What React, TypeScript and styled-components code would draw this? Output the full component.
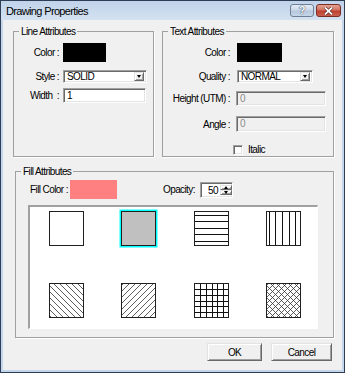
import React from "react";
import styled, { createGlobalStyle } from "styled-components";

const GlobalStyle = createGlobalStyle`
  html, body { margin: 0; padding: 0; background: #ffffff; }
  body {
    font-family: "Liberation Sans", Arial, sans-serif;
    font-size: 10px;
    letter-spacing: -0.6px;
    color: #000000;
  }
`;

const Window = styled.div`
  width: 345px;
  height: 373px;
  box-sizing: border-box;
  border: 1px solid #2e3e55;
  background: #c4d6ec;
  display: flex;
  flex-direction: column;
`;

const TitleBar = styled.div`
  height: 19px;
  flex: none;
  display: flex;
  align-items: center;
  justify-content: space-between;
  padding: 0 3px 0 5px;
  background: linear-gradient(#c0d3ea, #d4e2f1);
`;

const Title = styled.span`
  font-size: 11px;
  letter-spacing: -0.65px;
  color: #000;
`;

const CaptionButtons = styled.div`
  display: flex;
  gap: 2px;
`;

const CaptionButton = styled.div<{ $close?: boolean }>`
  width: ${(p) => (p.$close ? 25 : 24)}px;
  height: 13px;
  box-sizing: border-box;
  border-radius: 3px;
  display: flex;
  align-items: center;
  justify-content: center;
  border: 1px solid ${(p) => (p.$close ? "#7a2e26" : "#6f8096")};
  background: ${(p) =>
    p.$close
      ? "linear-gradient(#e3a393 0%, #d27462 45%, #bf3f2e 55%, #c9624f 100%)"
      : "linear-gradient(#e4ecf6 0%, #ccd9ea 45%, #b7c8de 55%, #c6d5e8 100%)"};
  color: #fff;
  font-weight: bold;
  font-size: 11px;
  letter-spacing: 0;
  line-height: 11px;
  text-shadow: 0 0 1px #2a3a50, 0 0 1px #2a3a50;
`;

const Client = styled.div`
  flex: 1;
  margin: 0 2px 2px;
  background: #f0f0f0;
  padding: 5px 8px 0 10px;
  display: flex;
  flex-direction: column;
`;

const TopRow = styled.div`
  display: flex;
  gap: 8px;
`;

const GroupBox = styled.fieldset<{ $w: number; $h: number; $ml?: number; $mt?: number }>`
  margin: ${(p) => p.$mt ?? 0}px 0 0 ${(p) => p.$ml ?? 0}px;
  padding: 0;
  min-width: 0;
  box-sizing: border-box;
  width: ${(p) => p.$w}px;
  height: ${(p) => p.$h}px;
  border: 1px solid #a0a0a0;
  box-shadow: 1px 1px 0 #ffffff;
`;

const Legend = styled.legend`
  margin-left: 5px;
  padding: 0 2px;
  line-height: 13px;
  font-size: 10px;
`;

const FieldRow = styled.div<{ $mt: number; $gap: number; $pl?: number }>`
  display: flex;
  align-items: center;
  gap: ${(p) => p.$gap}px;
  margin-top: ${(p) => p.$mt}px;
  padding-left: ${(p) => p.$pl ?? 0}px;
`;

const FieldLabel = styled.span<{ $w: number; $align?: string; $ml?: number }>`
  flex: none;
  width: ${(p) => p.$w}px;
  margin-left: ${(p) => p.$ml ?? 0}px;
  text-align: ${(p) => p.$align ?? "right"};
  white-space: pre;
`;

const Swatch = styled.div<{ $color: string; $w: number }>`
  flex: none;
  width: ${(p) => p.$w}px;
  height: 19px;
  background: ${(p) => p.$color};
`;

const sunken = `
  box-sizing: border-box;
  border-top: 1px solid #a0a0a0;
  border-left: 1px solid #a0a0a0;
  border-right: 1px solid #ffffff;
  border-bottom: 1px solid #ffffff;
  box-shadow: inset 1px 1px 0 #696969, inset -1px -1px 0 #e3e3e3;
`;

const raised = `
  box-sizing: border-box;
  background: #f0f0f0;
  border-top: 1px solid #e3e3e3;
  border-left: 1px solid #e3e3e3;
  border-right: 1px solid #696969;
  border-bottom: 1px solid #696969;
  box-shadow: inset 1px 1px 0 #ffffff, inset -1px -1px 0 #a0a0a0;
`;

const Combo = styled.div<{ $w: number }>`
  ${sunken}
  flex: none;
  width: ${(p) => p.$w}px;
  height: 13px;
  background: #fff;
  display: flex;
  align-items: center;
  justify-content: space-between;
  padding: 2px;
`;

const ComboText = styled.span`
  line-height: 9px;
  padding-left: 1px;
`;

const DropButton = styled.div`
  ${raised}
  width: 10px;
  height: 9px;
  display: flex;
  align-items: center;
  justify-content: center;
`;

const Arrow = styled.div<{ $up?: boolean }>`
  width: 0;
  height: 0;
  border-left: 2.5px solid transparent;
  border-right: 2.5px solid transparent;
  ${(p) => (p.$up ? "border-bottom: 3px solid #000;" : "border-top: 3px solid #000;")}
`;

const TextBox = styled.div<{ $w: number; $h: number; $disabled?: boolean }>`
  ${sunken}
  flex: none;
  width: ${(p) => p.$w}px;
  height: ${(p) => p.$h}px;
  background: ${(p) => (p.$disabled ? "#f0f0f0" : "#ffffff")};
  color: ${(p) => (p.$disabled ? "#8d8d8d" : "#000")};
  padding: 2px 3px;
  line-height: 10px;
`;

const CheckRow = styled.div`
  display: flex;
  align-items: center;
  gap: 5px;
  margin-top: 12px;
  padding-left: 70px;
`;

const CheckBox = styled.div`
  ${sunken}
  width: 10px;
  height: 10px;
  background: #fff;
`;

const Spin = styled.div`
  ${sunken}
  flex: none;
  width: 33px;
  height: 16px;
  background: #fff;
  display: flex;
  padding: 2px 0 2px 2px;
`;

const SpinValue = styled.span`
  flex: 1;
  text-align: right;
  padding-right: 2px;
  line-height: 12px;
`;

const SpinButtons = styled.div`
  width: 12px;
  display: flex;
  flex-direction: column;
`;

const SpinButton = styled.div`
  ${raised}
  flex: 1;
  display: flex;
  align-items: center;
  justify-content: center;
`;

const PatternList = styled.div`
  ${sunken}
  border-top-width: 2px;
  border-left-width: 2px;
  box-shadow: none;
  margin: 6px 0 0 12px;
  width: 290px;
  height: 124px;
  background: #fff;
  display: grid;
  grid-template-columns: repeat(4, 72.5px);
  grid-auto-rows: 35px;
  row-gap: 37px;
  padding-top: 4px;
  justify-items: center;
`;

const Tile = styled.svg<{ $selected?: boolean }>`
  display: block;
  box-shadow: ${(p) => (p.$selected ? "0 0 0 1.5px #00ffff" : "none")};
`;

const ButtonRow = styled.div`
  display: flex;
  justify-content: flex-end;
  gap: 9px;
  margin-top: 5px;
  padding-right: 2px;
`;

const PushButton = styled.div<{ $w: number }>`
  ${raised}
  width: ${(p) => p.$w}px;
  height: 18px;
  display: flex;
  align-items: center;
  justify-content: center;
`;

type Kind = "blank" | "solid" | "horiz" | "vert" | "back" | "fwd" | "cross" | "diag";

const S = 35;

function lines(kind: Kind) {
  const out: React.ReactNode[] = [];
  const k = (i: number) => `${kind}-${i}`;
  if (kind === "horiz" || kind === "cross") {
    const ys = kind === "horiz" ? [4.5, 10.5, 17.5, 23.5, 30.5] : [6.5, 12.5, 18.5, 23.5, 29.5];
    ys.forEach((y, i) => out.push(<line key={k(i)} x1={0} y1={y} x2={S} y2={y} />));
  }
  if (kind === "vert" || kind === "cross") {
    const xs = kind === "vert" ? [3.5, 9.5, 16.5, 23.5, 29.5] : [6.5, 12.5, 18.5, 23.5, 29.5];
    xs.forEach((x, i) => out.push(<line key={k(100 + i)} x1={x} y1={0} x2={x} y2={S} />));
  }
  if (kind === "back" || kind === "diag") {
    for (let c = -S + 3; c < S; c += 6) {
      out.push(
        <line key={k(200 + c)} x1={Math.max(0, c)} y1={Math.max(0, -c)} x2={Math.min(S, S + c)} y2={Math.min(S, S - c)} />
      );
    }
  }
  if (kind === "fwd" || kind === "diag") {
    for (let c = 3; c < 2 * S; c += 6) {
      out.push(
        <line key={k(300 + c)} x1={Math.max(0, c - S)} y1={Math.min(S, c)} x2={Math.min(S, c)} y2={Math.max(0, c - S)} />
      );
    }
  }
  return out;
}

const Pattern = ({ kind, selected }: { kind: Kind; selected?: boolean }) => {
  const slanted = kind === "back" || kind === "fwd" || kind === "diag";
  return (
    <Tile width={S} height={S} viewBox={`0 0 ${S} ${S}`} $selected={selected}>
      <rect x={0} y={0} width={S} height={S} fill={kind === "solid" ? "#c0c0c0" : "#fff"} />
      <g stroke={slanted ? "#333" : "#111"} strokeWidth={slanted ? 0.8 : 1}>
        {lines(kind)}
      </g>
      <rect x={0.5} y={0.5} width={S - 1} height={S - 1} fill="none" stroke="#202020" />
    </Tile>
  );
};

const patterns: Kind[] = ["blank", "solid", "horiz", "vert", "back", "fwd", "cross", "diag"];

export default function App() {
  return (
    <>
      <GlobalStyle />
      <Window>
        <TitleBar>
          <Title>Drawing Properties</Title>
          <CaptionButtons>
            <CaptionButton>?</CaptionButton>
            <CaptionButton $close>
              <svg width="9" height="8" viewBox="0 0 9 8">
                <path d="M1 0.5 L8 7.5 M8 0.5 L1 7.5" stroke="#3a1410" strokeWidth="3" />
                <path d="M1 0.5 L8 7.5 M8 0.5 L1 7.5" stroke="#ffffff" strokeWidth="1.8" />
              </svg>
            </CaptionButton>
          </CaptionButtons>
        </TitleBar>
        <Client>
          <TopRow>
            <GroupBox $w={141} $h={132}>
              <Legend>Line Attributes</Legend>
              <FieldRow $mt={5} $gap={4}>
                <FieldLabel $w={45}>Color :</FieldLabel>
                <Swatch $color="#000000" $w={43} />
              </FieldRow>
              <FieldRow $mt={8} $gap={4}>
                <FieldLabel $w={45}>Style :</FieldLabel>
                <Combo $w={84}>
                  <ComboText>SOLID</ComboText>
                  <DropButton>
                    <Arrow />
                  </DropButton>
                </Combo>
              </FieldRow>
              <FieldRow $mt={5} $gap={4}>
                <FieldLabel $w={45}>Width  :</FieldLabel>
                <TextBox $w={83} $h={15}>1</TextBox>
              </FieldRow>
            </GroupBox>
            <GroupBox $w={172} $h={132}>
              <Legend>Text Attributes</Legend>
              <FieldRow $mt={5} $gap={7}>
                <FieldLabel $w={67}>Color :</FieldLabel>
                <Swatch $color="#000000" $w={45} />
              </FieldRow>
              <FieldRow $mt={8} $gap={7}>
                <FieldLabel $w={67}>Quality :</FieldLabel>
                <Combo $w={76}>
                  <ComboText>NORMAL</ComboText>
                  <DropButton>
                    <Arrow />
                  </DropButton>
                </Combo>
              </FieldRow>
              <FieldRow $mt={8} $gap={6}>
                <FieldLabel $w={67}>Height (UTM) :</FieldLabel>
                <TextBox $w={90} $h={15} $disabled>0</TextBox>
              </FieldRow>
              <FieldRow $mt={10} $gap={6}>
                <FieldLabel $w={67}>Angle :</FieldLabel>
                <TextBox $w={90} $h={16} $disabled>0</TextBox>
              </FieldRow>
              <CheckRow>
                <CheckBox />
                <span>Italic</span>
              </CheckRow>
            </GroupBox>
          </TopRow>
          <GroupBox $w={319} $h={173} $ml={2} $mt={8}>
            <Legend>Fill Attributes</Legend>
            <FieldRow $mt={2} $gap={0} $pl={14}>
              <FieldLabel $w={40} $align="left">Fill Color :</FieldLabel>
              <Swatch $color="#ff8080" $w={47} />
              <FieldLabel $w={37} $align="left" $ml={46}>Opacity:</FieldLabel>
              <Spin>
                <SpinValue>50</SpinValue>
                <SpinButtons>
                  <SpinButton>
                    <Arrow $up />
                  </SpinButton>
                  <SpinButton>
                    <Arrow />
                  </SpinButton>
                </SpinButtons>
              </Spin>
            </FieldRow>
            <PatternList>
              {patterns.map((p) => (
                <Pattern key={p} kind={p} selected={p === "solid"} />
              ))}
            </PatternList>
          </GroupBox>
          <ButtonRow>
            <PushButton $w={55}>OK</PushButton>
            <PushButton $w={61}>Cancel</PushButton>
          </ButtonRow>
        </Client>
      </Window>
    </>
  );
}
